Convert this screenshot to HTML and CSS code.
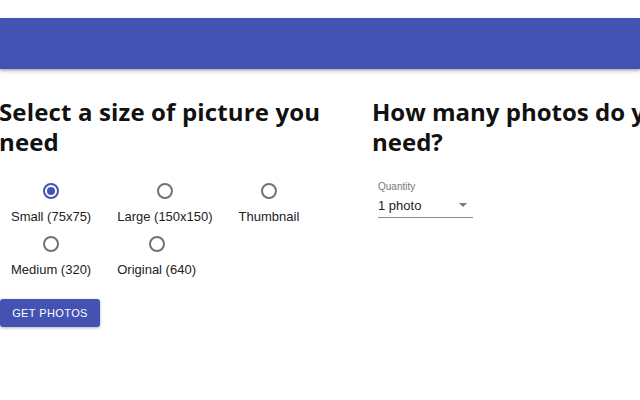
FILE: index.html
```html
<!DOCTYPE html>
<html>
<head>
<meta charset="utf-8">
<link rel="stylesheet" href="styles.css">
</head>
<body>
<div class="page">
  <header class="appbar"></header>
  <main class="content">
    <section class="col col-left">
      <h2 class="title">Select a size of picture you need</h2>
      <div class="radios">
        <label class="radio-item"><span class="radio checked"></span><span class="rlabel">Small (75x75)</span></label>
        <label class="radio-item"><span class="radio"></span><span class="rlabel">Large (150x150)</span></label>
        <label class="radio-item"><span class="radio"></span><span class="rlabel">Thumbnail</span></label>
        <label class="radio-item"><span class="radio"></span><span class="rlabel">Medium (320)</span></label>
        <label class="radio-item"><span class="radio"></span><span class="rlabel">Original (640)</span></label>
      </div>
      <button class="btn">GET PHOTOS</button>
    </section>
    <section class="col col-right">
      <h2 class="title">How many photos do you need?</h2>
      <div class="select">
        <div class="select-label">Quantity</div>
        <div class="select-value"><span>1 photo</span><span class="arrow"></span></div>
      </div>
    </section>
  </main>
</div>
</body>
</html>
```
FILE: styles.css
```css
html, body {
  margin: 0;
  padding: 0;
  overflow: hidden;
  background: #fff;
}
.page {
  width: 640px;
  height: 400px;
  padding-top: 18px;
  box-sizing: border-box;
  font-family: "Liberation Sans", Arial, sans-serif;
  overflow: hidden;
}
.appbar {
  height: 51px;
  background: #4352b3;
  box-shadow: 0 2px 4px rgba(0,0,0,0.25), 0 1px 2px rgba(0,0,0,0.15);
}
.content {
  display: flex;
  width: 780px;
}
.col-left {
  width: 372px;
  flex: none;
}
.col-right {
  width: 340px;
  flex: none;
}
.title {
  margin: 28px 0 0 0;
  font-family: "Open Sans", "DejaVu Sans", sans-serif;
  font-weight: 700;
  font-size: 24px;
  line-height: 30px;
  color: #111;
  letter-spacing: 0;
}
.col-left .title {
  margin-left: -1px;
  letter-spacing: 0.15px;
}
.radios {
  display: flex;
  flex-wrap: wrap;
  column-gap: 26px;
  width: 320px;
  margin: 26px 0 0 11px;
}
.radio-item {
  display: flex;
  flex-direction: column;
  align-items: center;
  height: 53px;
}
.radio {
  width: 16px;
  height: 16px;
  box-sizing: border-box;
  border: 2px solid #737373;
  border-radius: 50%;
  position: relative;
}
.radio.checked {
  border-color: #4352b3;
}
.radio.checked::after {
  content: "";
  position: absolute;
  left: 2px;
  top: 2px;
  width: 8px;
  height: 8px;
  border-radius: 50%;
  background: #4352b3;
}
.rlabel {
  margin-top: 10px;
  font-size: 13px;
  color: #222;
  line-height: 16px;
}
.btn {
  margin-top: 10px;
  width: 100px;
  height: 28px;
  border: none;
  border-radius: 3px;
  background: #4352b3;
  color: #fff;
  font-family: "Liberation Sans", Arial, sans-serif;
  font-size: 11px;
  letter-spacing: 0.4px;
  box-shadow: 0 1px 3px rgba(0,0,0,0.3);
  padding: 0;
}
.select {
  margin: 24px 0 0 6px;
  width: 95px;
}
.select-label {
  font-size: 10px;
  color: #777;
  font-family: "Liberation Sans", Arial, sans-serif;
  line-height: 12px;
}
.select-value {
  display: flex;
  justify-content: space-between;
  align-items: center;
  font-size: 13px;
  color: #222;
  height: 24px;
  border-bottom: 1px solid #8a8a8a;
  font-family: "Liberation Sans", Arial, sans-serif;
}
.arrow {
  width: 0;
  height: 0;
  border-left: 4px solid transparent;
  border-right: 4px solid transparent;
  border-top: 4px solid #777;
  margin-right: 6px;
}
```
